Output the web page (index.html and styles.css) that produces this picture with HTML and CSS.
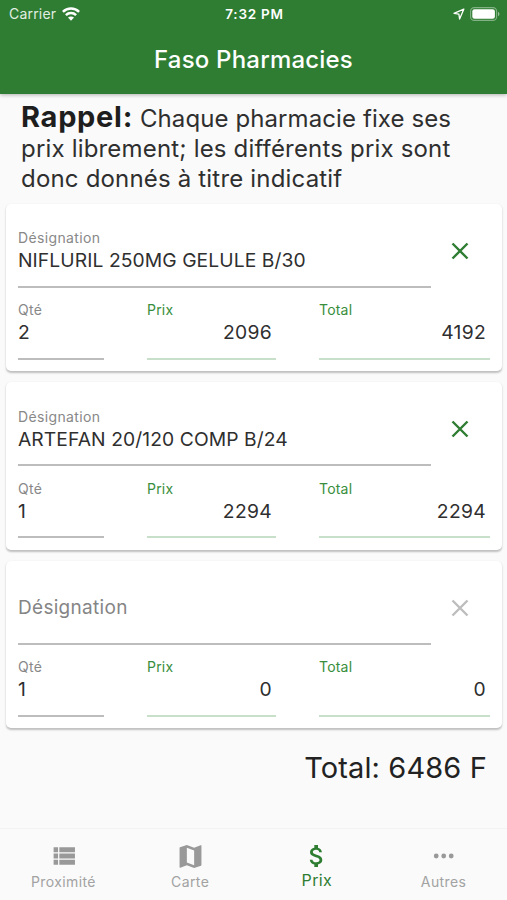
FILE: index.html
```html
<!DOCTYPE html>
<html lang="fr">
<head>
<meta charset="utf-8">
<title>Faso Pharmacies</title>
<link rel="stylesheet" href="styles.css">
</head>
<body>
<header class="header">
  <div class="status">
    <div class="status-left"><span class="carrier">Carrier</span>
      <svg class="wifi" viewBox="0 0 18 14"><g fill="none" stroke="#fff" stroke-width="2.500"><path d="M.9 4.900C5.400.5 12.600.5 17.100 4.900"/><path d="M3.900 8.200c2.800-2.800 7.400-2.800 10.200 0"/></g><path fill="#fff" d="M6 10.600c1.700-1.500 4.300-1.500 6 0l-3 3.200z"/></svg>
    </div>
    <div class="clock">7:32 PM</div>
    <div class="status-right">
      <svg class="arrow" viewBox="0 0 12 12"><path d="M10.800 1.200 1 5.300l4.900.8.7 4.900z" fill="none" stroke="#fff" stroke-width="1.300" stroke-linejoin="round"/></svg>
      <svg class="battery" viewBox="0 0 30 14"><rect x=".6" y=".6" width="26" height="12.800" rx="3.700" fill="none" stroke="#fff" stroke-opacity=".4" stroke-width="1.100"/><rect x="2.300" y="2.300" width="22.600" height="9.400" rx="2.200" fill="#fff"/><path d="M28 4.800c2 .8 2 3.600 0 4.400z" fill="#fff" fill-opacity=".5"/></svg>
    </div>
  </div>
  <h1 class="title">Faso Pharmacies</h1>
</header>
<main class="content">
  <p class="notice"><span class="line first"><strong>Rappel:</strong> <span>Chaque pharmacie fixe ses</span></span> <span class="line second">prix librement; les différents prix sont</span> <span class="line third">donc donnés à titre indicatif</span></p>

  <section class="card">
    <div class="row top">
      <div class="field"><span class="label">Désignation</span><span class="value">NIFLURIL 250MG GELULE B/30</span></div>
      <svg class="close" viewBox="0 0 18 18"><path d="M1.500 1.500l15 15M16.500 1.500l-15 15"/></svg>
    </div>
    <div class="row amounts">
      <div class="field"><span class="label">Qté</span><span class="value">2</span></div>
      <div class="field green"><span class="label">Prix</span><span class="value">2096</span></div>
      <div class="field green"><span class="label">Total</span><span class="value">4192</span></div>
    </div>
  </section>

  <section class="card">
    <div class="row top">
      <div class="field"><span class="label">Désignation</span><span class="value">ARTEFAN 20/120 COMP B/24</span></div>
      <svg class="close" viewBox="0 0 18 18"><path d="M1.500 1.500l15 15M16.500 1.500l-15 15"/></svg>
    </div>
    <div class="row amounts">
      <div class="field"><span class="label">Qté</span><span class="value">1</span></div>
      <div class="field green"><span class="label">Prix</span><span class="value">2294</span></div>
      <div class="field green"><span class="label">Total</span><span class="value">2294</span></div>
    </div>
  </section>

  <section class="card">
    <div class="row top">
      <div class="field"><span class="placeholder">Désignation</span></div>
      <svg class="close off" viewBox="0 0 18 18"><path d="M1.500 1.500l15 15M16.500 1.500l-15 15"/></svg>
    </div>
    <div class="row amounts">
      <div class="field"><span class="label">Qté</span><span class="value">1</span></div>
      <div class="field green"><span class="label">Prix</span><span class="value">0</span></div>
      <div class="field green"><span class="label">Total</span><span class="value">0</span></div>
    </div>
  </section>

  <div class="total"><span>Total: 6486 F</span></div>
</main>
<nav class="tabs">
  <div class="tab"><svg class="icon" viewBox="0 0 24 24"><path d="M2.500 3h4.300v4.800H2.500zM8 3h15v4.800H8zM2.500 9.100h4.300v4.800H2.500zM8 9.100h15v4.800H8zM2.500 15.200h4.300V20H2.500zM8 15.200h15V20H8z"/></svg><span class="tab-text">Proximité</span></div>
  <div class="tab"><svg class="icon" viewBox="0 0 24 24"><path fill-rule="evenodd" d="M22.500 1l-.2.030L15.500 3.600 8.500 1 1.900 3.200a.6.6 0 0 0-.4.560V22.400c0 .3.300.6.700.5L8.500 20.400l7 2.600 6.600-2.200a.6.6 0 0 0 .4-.56V1.600c0-.3-.2-.6-.6-.6zM15.500 20.400l-7-2.600V3.600l7 2.600z"/></svg><span class="tab-text">Carte</span></div>
  <div class="tab active"><svg class="icon" viewBox="0 0 24 24"><path transform="translate(-1.900 -2.600) scale(1.180)" d="M11.800 10.900c-2.270-.59-3-1.200-3-2.150 0-1.090 1.010-1.850 2.700-1.850 1.780 0 2.440.85 2.500 2.100h2.210c-.07-1.720-1.120-3.300-3.210-3.810V3h-3v2.160c-1.940.42-3.500 1.680-3.500 3.610 0 2.310 1.910 3.460 4.700 4.130 2.500.6 3 1.480 3 2.410 0 .69-.49 1.790-2.700 1.790-2.060 0-2.870-.92-2.980-2.100h-2.200c.12 2.190 1.760 3.420 3.680 3.830V21h3v-2.150c1.950-.37 3.500-1.500 3.500-3.550 0-2.840-2.430-3.810-4.700-4.400z"/></svg><span class="tab-text">Prix</span></div>
  <div class="tab"><svg class="icon" viewBox="0 0 24 24"><circle cx="5" cy="11.500" r="2.300"/><circle cx="12.200" cy="11.500" r="2.300"/><circle cx="19.400" cy="11.500" r="2.300"/></svg><span class="tab-text">Autres</span></div>
</nav>
</body>
</html>
```
FILE: styles.css
```css
* { box-sizing: border-box; }
body {
  margin: 0;
  width: 507px;
  height: 900px;
  display: flex;
  flex-direction: column;
  overflow: hidden;
  background: #fafafa;
  color: #2f2f2f;
  font-family: Inter, "Liberation Sans", sans-serif;
  white-space: nowrap;
}
svg { display: block; flex: none; }

.header {
  height: 94px;
  flex: none;
  background: #2e7d32;
  color: #fff;
  box-shadow: 0 1px 4px rgba(0, 0, 0, .3);
}
.status {
  height: 27px;
  display: grid;
  grid-template-columns: 1fr auto 1fr;
  align-items: center;
  padding: 0 7px 0 9px;
  font-size: 14px;
}
.status-left { display: flex; align-items: center; gap: 6px; }
.carrier { color: #e2eee2; letter-spacing: .2px; }
.wifi { width: 18px; height: 14px; }
.clock { font-weight: 600; font-size: 13.5px; letter-spacing: .75px; }
.status-right { display: flex; align-items: center; justify-content: flex-end; gap: 5px; }
.arrow { width: 12px; height: 12px; }
.battery { width: 30px; height: 14px; }
.title {
  margin: 0;
  height: 66px;
  line-height: 66px;
  text-align: center;
  font-size: 24px;
  font-weight: 500;
  letter-spacing: .2px;
}

.content { flex: 1; padding: 6px 5px 0 6px; }
.notice { margin: 0 0 10px; padding-left: 15px; font-size: 24px; letter-spacing: .18px; }
.line { display: block; height: 30px; line-height: 30px; }
.first { height: 34px; line-height: 33px; letter-spacing: .1px; }
.notice strong { font-size: 29px; font-weight: 700; letter-spacing: .7px; color: #1e1e1e; }

.card {
  height: 167.3px;
  margin-bottom: 11px;
  padding: 22px 12px 0;
  background: #fff;
  border-radius: 5px;
  box-shadow: 0 1.5px 2px rgba(0, 0, 0, .24);
}
.row { display: grid; }
.top { grid-template-columns: 413px 58px; }
.amounts { grid-template-columns: 86px 129px 171px; column-gap: 43px; padding-top: 10px; }
.field {
  height: 62px;
  padding-top: 2.4px;
  display: flex;
  flex-direction: column;
  border-bottom: 2px solid #bdbdbd;
}
.label { height: 20px; line-height: 20px; font-size: 14px; color: #888; letter-spacing: .35px; }
.value { height: 25px; line-height: 25px; font-size: 19.3px; letter-spacing: .07px; }
.green { border-color: #c8e0c9; }
.green .label { color: #388e3c; letter-spacing: .2px; }
.green .value { text-align: right; padding-right: 4px; letter-spacing: .3px; }
.placeholder { margin-top: 11px; line-height: 24px; font-size: 19px; color: #858585; letter-spacing: .3px; }
.close { width: 18px; height: 18px; justify-self: center; margin-top: 16px; }
.close path { fill: none; stroke: #2e7d32; stroke-width: 2.4; }
.close.off path { stroke: #bdbdbd; }

.total { padding: 11px 15px 0 0; text-align: right; font-size: 29px; line-height: 36px; letter-spacing: .12px; color: #222; }

.tabs {
  height: 72px;
  flex: none;
  display: grid;
  grid-template-columns: repeat(4, 1fr);
  border-top: 1px solid #f3f3f3;
}
.tab {
  display: flex;
  flex-direction: column;
  align-items: center;
  padding-top: 15px;
  color: #a2a2a2;
  font-size: 14px;
}
.icon { width: 25px; height: 25px; fill: #999; }
.tab-text { line-height: 20px; margin-top: 3px; letter-spacing: .4px; }
.active { color: #2e7d32; font-size: 16px; }
.active .icon { fill: #2e7d32; }
.active .tab-text { margin-top: 1px; }
```
